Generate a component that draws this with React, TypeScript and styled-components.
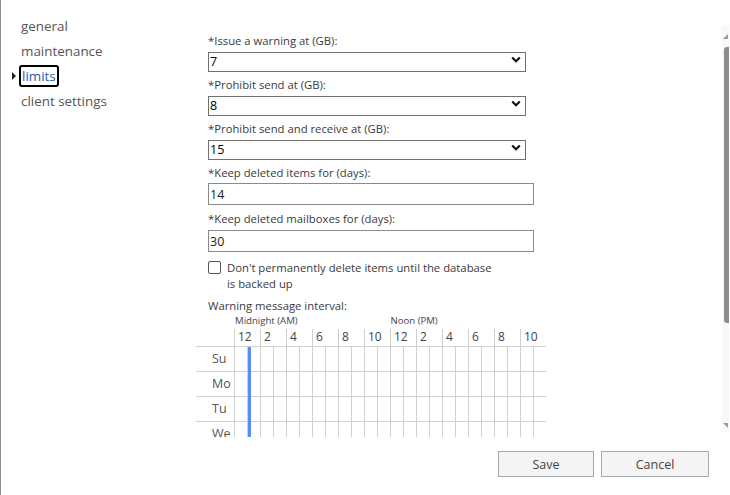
import React from "react";
import styled, { createGlobalStyle } from "styled-components";

const GlobalStyle = createGlobalStyle`
  html, body {
    margin: 0;
    padding: 0;
    background: #fff;
  }
  body {
    font-family: "Segoe UI", "Open Sans", sans-serif;
    color: #333;
  }
`;

const Frame = styled.div`
  width: 730px;
  height: 495px;
  display: flex;
  flex-direction: column;
  border-left: 1px solid #8c8c8c;
  box-sizing: border-box;
  overflow: hidden;
`;

const Body = styled.div`
  display: flex;
  height: 437px;
  overflow: hidden;
`;

const Nav = styled.ul`
  list-style: none;
  margin: 0;
  padding: 14px 0 0 0;
  width: 190px;
  flex: none;
`;

const NavItem = styled.li<{ $active?: boolean }>`
  position: relative;
  height: 25px;
  line-height: 25px;
  padding-left: 20px;
  font-size: 13.4px;
  color: ${(p) => (p.$active ? "#1d5fa6" : "#555")};
  cursor: pointer;

  span {
    display: inline-block;
    box-sizing: border-box;
    height: 22px;
    line-height: 18px;
    ${(p) =>
      p.$active &&
      `
      margin-left: -2px;
      padding: 0 1px 0 1px;
      border: 2px solid #000;
      border-radius: 3px;
    `}
  }
`;

const Caret = styled.i`
  position: absolute;
  left: 11px;
  top: 8px;
  width: 0;
  height: 0;
  border-left: 4px solid #222;
  border-top: 4px solid transparent;
  border-bottom: 4px solid transparent;
`;

const Content = styled.div`
  flex: 1;
  overflow: hidden;
  padding: 33px 0 0 17px;
`;

const Label = styled.label<{ $gap?: number }>`
  display: block;
  font-size: 11.3px;
  line-height: 16px;
  color: #3a3a3a;
  margin-top: ${(p) => p.$gap ?? 0}px;
`;

const SelectWrap = styled.div`
  position: relative;
  width: 318px;
  height: 20px;
`;

const Select = styled.select`
  appearance: none;
  width: 100%;
  height: 100%;
  box-sizing: border-box;
  margin: 0;
  padding: 0 0 0 1px;
  border: 1px solid #707070;
  border-radius: 0;
  background: #fff;
  font-family: inherit;
  font-size: 12.5px;
  color: #000;
  outline: none;
`;

const Chevron = styled.svg`
  position: absolute;
  right: 5px;
  top: 7px;
  pointer-events: none;
`;

const TextInput = styled.input<{ $gap?: number }>`
  display: block;
  width: 326px;
  height: 22px;
  box-sizing: border-box;
  margin: ${(p) => p.$gap ?? 2}px 0 0 0;
  padding: 0 0 0 1px;
  border: 1px solid #8a8a8a;
  font-family: inherit;
  font-size: 12.5px;
  color: #222;
  outline: none;
`;

const CheckRow = styled.label`
  display: flex;
  align-items: flex-start;
  gap: 6px;
  margin-top: 8px;
  font-size: 11.3px;
  line-height: 16px;
  color: #3a3a3a;
`;

const CheckBox = styled.input`
  appearance: none;
  flex: none;
  width: 13px;
  height: 13px;
  margin: 1px 0 0 0;
  box-sizing: border-box;
  border: 1px solid #555;
  border-radius: 2px;
  background: #fff;
`;

const IntervalLabel = styled.div`
  font-size: 11.3px;
  line-height: 16px;
  margin-top: 6px;
  color: #3a3a3a;
`;

const Schedule = styled.div`
  margin-left: -12px;
  width: 350px;
`;

const PeriodRow = styled.div`
  display: flex;
  height: 15px;
  padding-left: 39px;
  font-size: 9.6px;
  line-height: 14px;
  color: #444;
`;

const Period = styled.span`
  width: 156px;
`;

const GridRow = styled.div<{ $h: number }>`
  display: flex;
  height: ${(p) => p.$h}px;
  border-bottom: 1px solid #cfcfcf;
`;

const Corner = styled.div`
  width: 38px;
  flex: none;
`;

const HourLabel = styled.div`
  width: 26px;
  flex: none;
  box-sizing: border-box;
  border-left: 1px solid #cfcfcf;
  padding-left: 3px;
  font-size: 12px;
  line-height: 16px;
  color: #444;
`;

const DayLabel = styled.div`
  width: 38px;
  flex: none;
  box-sizing: border-box;
  padding-left: 16px;
  font-size: 12.5px;
  line-height: 24px;
  color: #555;
`;

const Slot = styled.div<{ $marked?: boolean }>`
  position: relative;
  width: 13px;
  flex: none;
  box-sizing: border-box;
  border-left: 1px solid #cfcfcf;

  ${(p) =>
    p.$marked &&
    `
    &::after {
      content: "";
      position: absolute;
      left: 0;
      top: 0;
      bottom: -1px;
      width: 3px;
      background: #5b8cf5;
    }
  `}
`;

const ScrollTrack = styled.div`
  width: 7px;
  flex: none;
  margin: 25px 1px 5px 0;
  background: #f8f8f8;
  display: flex;
  flex-direction: column;
  align-items: flex-end;
`;

const ScrollArrow = styled.svg<{ $top: number }>`
  margin-top: ${(p) => p.$top}px;
  margin-right: 1px;
`;

const ScrollThumb = styled.div`
  width: 5px;
  height: 276px;
  margin-top: 8px;
  background: #8c8c8c;
  border-radius: 3px 0 0 3px;
`;

const Footer = styled.div`
  flex: 1;
  display: flex;
  justify-content: flex-end;
  align-items: flex-start;
  gap: 7px;
  padding: 14px 21px 0 0;
`;

const Button = styled.button<{ $w: number }>`
  width: ${(p) => p.$w}px;
  height: 26px;
  box-sizing: border-box;
  border: 1px solid #a3aaad;
  background: #f4f4f4;
  font-family: inherit;
  font-size: 12.5px;
  color: #444;
  cursor: pointer;
`;

const navItems = ["general", "maintenance", "limits", "client settings"];
const hours = ["12", "2", "4", "6", "8", "10", "12", "2", "4", "6", "8", "10"];
const days = ["Su", "Mo", "Tu", "We"];

const QuotaSelect = ({ value }: { value: string }) => (
  <SelectWrap>
    <Select defaultValue={value}>
      <option>{value}</option>
    </Select>
    <Chevron width="10" height="7" viewBox="0 0 10 7">
      <path d="M1.2 1.5 L5 5.2 L8.8 1.5" fill="none" stroke="#111" strokeWidth="2.2" />
    </Chevron>
  </SelectWrap>
);

export default function App() {
  return (
    <>
      <GlobalStyle />
      <Frame>
        <Body>
          <Nav>
            {navItems.map((item) => (
              <NavItem key={item} $active={item === "limits"}>
                {item === "limits" && <Caret />}
                <span>{item}</span>
              </NavItem>
            ))}
          </Nav>
          <Content>
            <Label>*Issue a warning at (GB):</Label>
            <QuotaSelect value="7" />
            <Label $gap={8}>*Prohibit send at (GB):</Label>
            <QuotaSelect value="8" />
            <Label $gap={8}>*Prohibit send and receive at (GB):</Label>
            <QuotaSelect value="15" />
            <Label $gap={8}>*Keep deleted items for (days):</Label>
            <TextInput defaultValue="14" />
            <Label $gap={6}>*Keep deleted mailboxes for (days):</Label>
            <TextInput defaultValue="30" $gap={3} />
            <CheckRow>
              <CheckBox type="checkbox" />
              <span>
                Don't permanently delete items until the database
                <br />
                is backed up
              </span>
            </CheckRow>
            <IntervalLabel>Warning message interval:</IntervalLabel>
            <Schedule>
              <PeriodRow>
                <Period>Midnight (AM)</Period>
                <Period>Noon (PM)</Period>
              </PeriodRow>
              <GridRow $h={17}>
                <Corner />
                {hours.map((h, i) => (
                  <HourLabel key={i}>{h}</HourLabel>
                ))}
              </GridRow>
              {days.map((d) => (
                <GridRow key={d} $h={24}>
                  <DayLabel>{d}</DayLabel>
                  {Array.from({ length: 24 }, (_, i) => (
                    <Slot key={i} $marked={i === 1} />
                  ))}
                </GridRow>
              ))}
            </Schedule>
          </Content>
          <ScrollTrack>
            <ScrollArrow $top={9} width="5" height="5" viewBox="0 0 5 5">
              <polygon points="5,0 5,5 0,5" fill="#9a9a9a" />
            </ScrollArrow>
            <ScrollThumb />
            <ScrollArrow $top={100} width="5" height="5" viewBox="0 0 5 5">
              <polygon points="0,0 5,0 5,5" fill="#9a9a9a" />
            </ScrollArrow>
          </ScrollTrack>
        </Body>
        <Footer>
          <Button $w={96}>Save</Button>
          <Button $w={108}>Cancel</Button>
        </Footer>
      </Frame>
    </>
  );
}
